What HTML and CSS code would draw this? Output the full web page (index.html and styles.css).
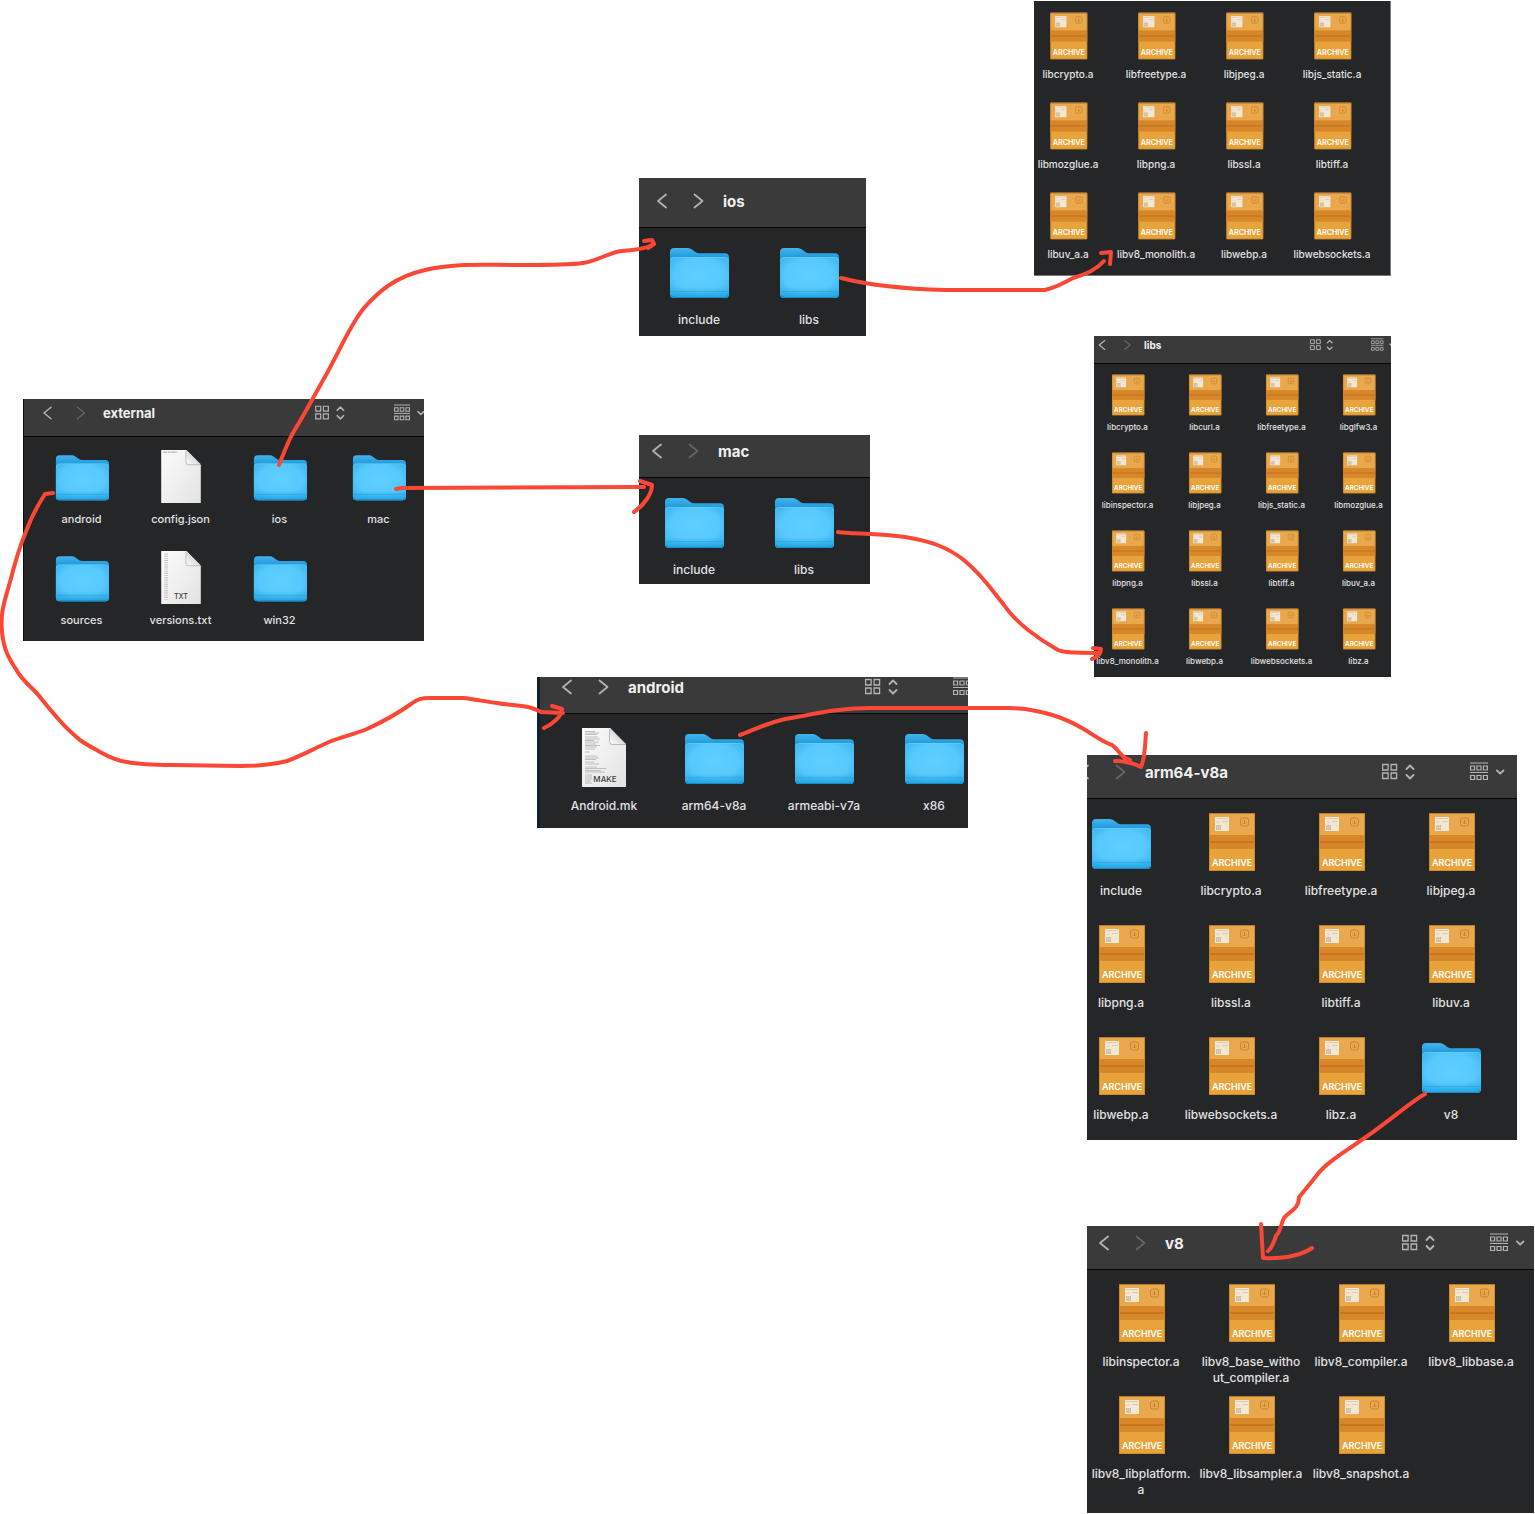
FILE: index.html
```html
<!DOCTYPE html>
<html lang="en">
<head>
<meta charset="utf-8">
<title>external – library folder map</title>
<meta name="viewport" content="width=device-width, initial-scale=1">
<link rel="stylesheet" href="styles.css">
</head>
<body>
<svg class="sprite" aria-hidden="true">
  <defs>
    <linearGradient id="folder-back" x1="0" y1="0" x2="0" y2="1">
      <stop offset="0" stop-color="#43b3ea"/><stop offset=".22" stop-color="#1b97dc"/><stop offset="1" stop-color="#1489cb"/>
    </linearGradient>
    <radialGradient id="folder-front" cx=".5" cy=".45" r=".68">
      <stop offset="0" stop-color="#5fceff"/><stop offset=".6" stop-color="#58c9fd"/><stop offset="1" stop-color="#35b1ec"/>
    </radialGradient>
    <linearGradient id="folder-base" x1="0" y1="0" x2="0" y2="1">
      <stop offset="0" stop-color="#35b2ec" stop-opacity="0"/><stop offset="1" stop-color="#1fa3e2"/>
    </linearGradient>
    <linearGradient id="page" x1="0" y1="0" x2="1" y2="1">
      <stop offset="0" stop-color="#fbfbfb"/><stop offset=".6" stop-color="#ededed"/><stop offset="1" stop-color="#e2e2e2"/>
    </linearGradient>
    <linearGradient id="page-fold" x1="0" y1="1" x2="1" y2="0">
      <stop offset="0" stop-color="#ffffff"/><stop offset=".5" stop-color="#d9d9d9"/>
    </linearGradient>
  </defs>

  <symbol id="folder" viewBox="0 0 64 60">
    <path d="M3 11q0-4 4-4h14q2 0 4 1.500l4 3q1 .8 3 .8h26q4 0 4 4v36q0 4-4 4h-51q-4 0-4-4z" fill="url(#folder-back)"/>
    <path d="M3 20q0-4 4-4h51q4 0 4 4v33q0 4-4 4h-51q-4 0-4-4z" fill="url(#folder-front)"/>
    <path d="M3 46h59v7q0 4-4 4h-51q-4 0-4-4z" fill="url(#folder-base)"/>
    <path d="M3.500 20q0-3.500 3.500-3.500h51q3.500 0 3.500 3.500" fill="none" stroke="#7ad4fb" stroke-width=".8" opacity=".6"/>
    <path d="M4 50.500h57" stroke="#269cd3" stroke-width=".5"/>
    <path d="M4 54q1 2.500 4 2.500h49q3 0 4-2.500" fill="none" stroke="#168bc6" stroke-width="1"/>
  </symbol>

  <symbol id="archive" viewBox="0 0 64 60">
    <rect x="10" y="1" width="46" height="58" rx="1" fill="#e8a33a"/>
    <rect x="10" y="1" width="46" height="23" rx="1" fill="#eaa84c"/>
    <rect x="10" y="23" width="46" height="14" fill="#d88728"/>
    <path d="M10 30h46" stroke="#b0691c" stroke-width="1"/>
    <path d="M10 1.500h46" stroke="#b67b31" stroke-width="1"/>
    <path d="M10.500 2v56M55.500 2v56M10 58.500h46" fill="none" stroke="#c9862c" stroke-width=".8"/>
    <rect x="16" y="5" width="14" height="14" rx=".6" fill="#f5e8d3"/>
    <path d="M17 6.500h12M23 9.500h6" stroke="#d9ccb8" stroke-width="1.200"/>
    <path d="M17 10h4" stroke="#d9ccb8" stroke-width=".8"/>
    <path d="M17 13h5v5h-5z" fill="#c9bba6"/>
    <path d="M18.500 13v5M20.500 13v5M17 15.500h5" stroke="#e6d9c4" stroke-width=".5"/>
    <rect x="41.500" y="6" width="8" height="8" rx="2" fill="none" stroke="#c98431" stroke-width="1"/>
    <path d="M45.500 8v4M43.800 10.300l1.700 1.700 1.700-1.700" fill="none" stroke="#c98431" stroke-width="1"/>
  </symbol>

  <symbol id="page-blank" viewBox="0 0 64 60">
    <path d="M10 1h28l16 17v42H10z" fill="url(#page)"/>
    <path d="M38 1v13q0 3 3 3h13z" fill="url(#page-fold)"/>
    <path d="M37.500 2v12.500q0 3 3 3H54" fill="none" stroke="#a9a9a9" stroke-width=".8"/>
  </symbol>

  <symbol id="page-json" viewBox="0 0 64 60">
    <use href="#page-blank" width="64" height="60"/>
    <path d="M12 3.500h16" stroke="#b5b5b5" stroke-width="1.200" stroke-dasharray="5 .6 3 .6"/>
  </symbol>

  <symbol id="page-txt" viewBox="0 0 64 60">
    <use href="#page-blank" width="64" height="60"/>
    <path d="M15.500 4v51" stroke="#bdbdbd" stroke-width="4" stroke-dasharray="1 1.400"/>
  </symbol>

  <symbol id="page-make" viewBox="0 0 64 60">
    <use href="#page-blank" width="64" height="60"/>
    <path d="M13 4.500h10M13 6h14M13 7.500h12M13 10h13M13 12h15M13 13.500h9M13 15h14M13 17h11M13 18.500h15M13 20h12M13 22h10M13 25h5M13 29h12M13 31h14M13 32.500h11M13 35h9M13 37h14M13 40h12M13 41.500h21M13 43.500h16M13 45h20M13 48h7M13 50h7M13 52h7M13 54h6M13 56h7" stroke="#b0b0b0" stroke-width=".8"/>
  </symbol>

  <symbol id="back" viewBox="0 0 26 20">
    <path d="M17 3.500l-8 6.500 8 6.500" fill="none" stroke="currentColor" stroke-width="1.700" stroke-linecap="round" stroke-linejoin="round"/>
  </symbol>
  <symbol id="forward" viewBox="0 0 26 20">
    <path d="M9.500 3.500l8 6.500-8 6.500" fill="none" stroke="currentColor" stroke-width="1.700" stroke-linecap="round" stroke-linejoin="round"/>
  </symbol>
  <symbol id="view" viewBox="0 0 34 20">
    <path d="M.6 2.500h5.500V8H.6zM9.100 2.500h5.500V8H9.100zM.6 11h5.500v5.500H.6zM9.100 11h5.500v5.500H9.100z" fill="none" stroke="currentColor" stroke-width="1.300"/>
    <path d="M24.500 7l3.500-3.500L31.500 7M24.500 13l3.500 3.500 3.500-3.500" fill="none" stroke="currentColor" stroke-width="1.800" stroke-linecap="round" stroke-linejoin="round"/>
  </symbol>
  <symbol id="group" viewBox="0 0 36 20">
    <path d="M0 1h18M0 10.500h18" stroke="currentColor" stroke-width="1.100"/>
    <path d="M.6 4h4v4h-4zM7 4h4v4H7zM13.400 4h4v4h-4zM.6 13.500h4v4h-4zM7 13.500h4v4H7zM13.400 13.500h4v4h-4z" fill="none" stroke="currentColor" stroke-width="1.200"/>
    <path d="M27 8.500l3.200 3.200 3.200-3.200" fill="none" stroke="currentColor" stroke-width="1.800" stroke-linecap="round" stroke-linejoin="round"/>
  </symbol>
</svg>

<main class="canvas">

  <section class="window window-ios-libs size-small" aria-label="ios libs">
    <ul class="files">
      <li class="file"><svg class="icon" viewBox="0 0 64 60"><use href="#archive"/><text x="33" y="54" class="badge-archive">ARCHIVE</text></svg><span>libcrypto.a</span></li>
      <li class="file"><svg class="icon" viewBox="0 0 64 60"><use href="#archive"/><text x="33" y="54" class="badge-archive">ARCHIVE</text></svg><span>libfreetype.a</span></li>
      <li class="file"><svg class="icon" viewBox="0 0 64 60"><use href="#archive"/><text x="33" y="54" class="badge-archive">ARCHIVE</text></svg><span>libjpeg.a</span></li>
      <li class="file"><svg class="icon" viewBox="0 0 64 60"><use href="#archive"/><text x="33" y="54" class="badge-archive">ARCHIVE</text></svg><span>libjs_static.a</span></li>
      <li class="file"><svg class="icon" viewBox="0 0 64 60"><use href="#archive"/><text x="33" y="54" class="badge-archive">ARCHIVE</text></svg><span>libmozglue.a</span></li>
      <li class="file"><svg class="icon" viewBox="0 0 64 60"><use href="#archive"/><text x="33" y="54" class="badge-archive">ARCHIVE</text></svg><span>libpng.a</span></li>
      <li class="file"><svg class="icon" viewBox="0 0 64 60"><use href="#archive"/><text x="33" y="54" class="badge-archive">ARCHIVE</text></svg><span>libssl.a</span></li>
      <li class="file"><svg class="icon" viewBox="0 0 64 60"><use href="#archive"/><text x="33" y="54" class="badge-archive">ARCHIVE</text></svg><span>libtiff.a</span></li>
      <li class="file"><svg class="icon" viewBox="0 0 64 60"><use href="#archive"/><text x="33" y="54" class="badge-archive">ARCHIVE</text></svg><span>libuv_a.a</span></li>
      <li class="file"><svg class="icon" viewBox="0 0 64 60"><use href="#archive"/><text x="33" y="54" class="badge-archive">ARCHIVE</text></svg><span>libv8_monolith.a</span></li>
      <li class="file"><svg class="icon" viewBox="0 0 64 60"><use href="#archive"/><text x="33" y="54" class="badge-archive">ARCHIVE</text></svg><span>libwebp.a</span></li>
      <li class="file"><svg class="icon" viewBox="0 0 64 60"><use href="#archive"/><text x="33" y="54" class="badge-archive">ARCHIVE</text></svg><span>libwebsockets.a</span></li>
    </ul>
  </section>

  <section class="window window-ios size-large">
    <header class="bar">
      <button class="nav" aria-label="Back"><svg><use href="#back"/></svg></button>
      <button class="nav" aria-label="Forward"><svg><use href="#forward"/></svg></button>
      <h2>ios</h2>
    </header>
    <ul class="files">
      <li class="file"><svg class="icon"><use href="#folder"/></svg><span>include</span></li>
      <li class="file"><svg class="icon"><use href="#folder"/></svg><span>libs</span></li>
    </ul>
  </section>

  <section class="window window-mac-libs size-mini">
    <header class="bar">
      <button class="nav" aria-label="Back"><svg><use href="#back"/></svg></button>
      <button class="nav" aria-label="Forward" disabled><svg><use href="#forward"/></svg></button>
      <h2>libs</h2>
      <div class="tools">
        <button class="tool-view" aria-label="View"><svg><use href="#view"/></svg></button>
        <button class="tool-group" aria-label="Group"><svg><use href="#group"/></svg></button>
      </div>
    </header>
    <ul class="files">
      <li class="file"><svg class="icon" viewBox="0 0 64 60"><use href="#archive"/><text x="33" y="54" class="badge-archive">ARCHIVE</text></svg><span>libcrypto.a</span></li>
      <li class="file"><svg class="icon" viewBox="0 0 64 60"><use href="#archive"/><text x="33" y="54" class="badge-archive">ARCHIVE</text></svg><span>libcurl.a</span></li>
      <li class="file"><svg class="icon" viewBox="0 0 64 60"><use href="#archive"/><text x="33" y="54" class="badge-archive">ARCHIVE</text></svg><span>libfreetype.a</span></li>
      <li class="file"><svg class="icon" viewBox="0 0 64 60"><use href="#archive"/><text x="33" y="54" class="badge-archive">ARCHIVE</text></svg><span>libglfw3.a</span></li>
      <li class="file"><svg class="icon" viewBox="0 0 64 60"><use href="#archive"/><text x="33" y="54" class="badge-archive">ARCHIVE</text></svg><span>libinspector.a</span></li>
      <li class="file"><svg class="icon" viewBox="0 0 64 60"><use href="#archive"/><text x="33" y="54" class="badge-archive">ARCHIVE</text></svg><span>libjpeg.a</span></li>
      <li class="file"><svg class="icon" viewBox="0 0 64 60"><use href="#archive"/><text x="33" y="54" class="badge-archive">ARCHIVE</text></svg><span>libjs_static.a</span></li>
      <li class="file"><svg class="icon" viewBox="0 0 64 60"><use href="#archive"/><text x="33" y="54" class="badge-archive">ARCHIVE</text></svg><span>libmozglue.a</span></li>
      <li class="file"><svg class="icon" viewBox="0 0 64 60"><use href="#archive"/><text x="33" y="54" class="badge-archive">ARCHIVE</text></svg><span>libpng.a</span></li>
      <li class="file"><svg class="icon" viewBox="0 0 64 60"><use href="#archive"/><text x="33" y="54" class="badge-archive">ARCHIVE</text></svg><span>libssl.a</span></li>
      <li class="file"><svg class="icon" viewBox="0 0 64 60"><use href="#archive"/><text x="33" y="54" class="badge-archive">ARCHIVE</text></svg><span>libtiff.a</span></li>
      <li class="file"><svg class="icon" viewBox="0 0 64 60"><use href="#archive"/><text x="33" y="54" class="badge-archive">ARCHIVE</text></svg><span>libuv_a.a</span></li>
      <li class="file"><svg class="icon" viewBox="0 0 64 60"><use href="#archive"/><text x="33" y="54" class="badge-archive">ARCHIVE</text></svg><span>libv8_monolith.a</span></li>
      <li class="file"><svg class="icon" viewBox="0 0 64 60"><use href="#archive"/><text x="33" y="54" class="badge-archive">ARCHIVE</text></svg><span>libwebp.a</span></li>
      <li class="file"><svg class="icon" viewBox="0 0 64 60"><use href="#archive"/><text x="33" y="54" class="badge-archive">ARCHIVE</text></svg><span>libwebsockets.a</span></li>
      <li class="file"><svg class="icon" viewBox="0 0 64 60"><use href="#archive"/><text x="33" y="54" class="badge-archive">ARCHIVE</text></svg><span>libz.a</span></li>
    </ul>
  </section>

  <section class="window window-external size-medium">
    <header class="bar">
      <button class="nav" aria-label="Back"><svg><use href="#back"/></svg></button>
      <button class="nav" aria-label="Forward" disabled><svg><use href="#forward"/></svg></button>
      <h2>external</h2>
      <div class="tools">
        <button class="tool-view" aria-label="View"><svg><use href="#view"/></svg></button>
        <button class="tool-group" aria-label="Group"><svg><use href="#group"/></svg></button>
      </div>
    </header>
    <ul class="files">
      <li class="file"><svg class="icon"><use href="#folder"/></svg><span>android</span></li>
      <li class="file"><svg class="icon"><use href="#page-json"/></svg><span>config.json</span></li>
      <li class="file"><svg class="icon"><use href="#folder"/></svg><span>ios</span></li>
      <li class="file"><svg class="icon"><use href="#folder"/></svg><span>mac</span></li>
      <li class="file"><svg class="icon"><use href="#folder"/></svg><span>sources</span></li>
      <li class="file"><svg class="icon" viewBox="0 0 64 60"><use href="#page-txt"/><text x="32" y="54" class="badge-page">TXT</text></svg><span>versions.txt</span></li>
      <li class="file"><svg class="icon"><use href="#folder"/></svg><span>win32</span></li>
    </ul>
  </section>

  <section class="window window-mac size-large">
    <header class="bar">
      <button class="nav" aria-label="Back"><svg><use href="#back"/></svg></button>
      <button class="nav" aria-label="Forward" disabled><svg><use href="#forward"/></svg></button>
      <h2>mac</h2>
    </header>
    <ul class="files">
      <li class="file"><svg class="icon"><use href="#folder"/></svg><span>include</span></li>
      <li class="file"><svg class="icon"><use href="#folder"/></svg><span>libs</span></li>
    </ul>
  </section>

  <section class="window window-android size-large">
    <header class="bar">
      <button class="nav" aria-label="Back"><svg><use href="#back"/></svg></button>
      <button class="nav" aria-label="Forward"><svg><use href="#forward"/></svg></button>
      <h2>android</h2>
      <div class="tools">
        <button class="tool-view" aria-label="View"><svg><use href="#view"/></svg></button>
        <button class="tool-group" aria-label="Group"><svg><use href="#group"/></svg></button>
      </div>
    </header>
    <ul class="files">
      <li class="file"><svg class="icon" viewBox="0 0 64 60"><use href="#page-make"/><text x="33" y="55" class="badge-page">MAKE</text></svg><span>Android.mk</span></li>
      <li class="file"><svg class="icon"><use href="#folder"/></svg><span>arm64-v8a</span></li>
      <li class="file"><svg class="icon"><use href="#folder"/></svg><span>armeabi-v7a</span></li>
      <li class="file"><svg class="icon"><use href="#folder"/></svg><span>x86</span></li>
    </ul>
  </section>

  <section class="window window-arm64 size-large">
    <header class="bar">
      <button class="nav" aria-label="Back"><svg><use href="#back"/></svg></button>
      <button class="nav" aria-label="Forward" disabled><svg><use href="#forward"/></svg></button>
      <h2>arm64-v8a</h2>
      <div class="tools">
        <button class="tool-view" aria-label="View"><svg><use href="#view"/></svg></button>
        <button class="tool-group" aria-label="Group"><svg><use href="#group"/></svg></button>
      </div>
    </header>
    <ul class="files">
      <li class="file"><svg class="icon"><use href="#folder"/></svg><span>include</span></li>
      <li class="file"><svg class="icon" viewBox="0 0 64 60"><use href="#archive"/><text x="33" y="54" class="badge-archive">ARCHIVE</text></svg><span>libcrypto.a</span></li>
      <li class="file"><svg class="icon" viewBox="0 0 64 60"><use href="#archive"/><text x="33" y="54" class="badge-archive">ARCHIVE</text></svg><span>libfreetype.a</span></li>
      <li class="file"><svg class="icon" viewBox="0 0 64 60"><use href="#archive"/><text x="33" y="54" class="badge-archive">ARCHIVE</text></svg><span>libjpeg.a</span></li>
      <li class="file"><svg class="icon" viewBox="0 0 64 60"><use href="#archive"/><text x="33" y="54" class="badge-archive">ARCHIVE</text></svg><span>libpng.a</span></li>
      <li class="file"><svg class="icon" viewBox="0 0 64 60"><use href="#archive"/><text x="33" y="54" class="badge-archive">ARCHIVE</text></svg><span>libssl.a</span></li>
      <li class="file"><svg class="icon" viewBox="0 0 64 60"><use href="#archive"/><text x="33" y="54" class="badge-archive">ARCHIVE</text></svg><span>libtiff.a</span></li>
      <li class="file"><svg class="icon" viewBox="0 0 64 60"><use href="#archive"/><text x="33" y="54" class="badge-archive">ARCHIVE</text></svg><span>libuv.a</span></li>
      <li class="file"><svg class="icon" viewBox="0 0 64 60"><use href="#archive"/><text x="33" y="54" class="badge-archive">ARCHIVE</text></svg><span>libwebp.a</span></li>
      <li class="file"><svg class="icon" viewBox="0 0 64 60"><use href="#archive"/><text x="33" y="54" class="badge-archive">ARCHIVE</text></svg><span>libwebsockets.a</span></li>
      <li class="file"><svg class="icon" viewBox="0 0 64 60"><use href="#archive"/><text x="33" y="54" class="badge-archive">ARCHIVE</text></svg><span>libz.a</span></li>
      <li class="file"><svg class="icon"><use href="#folder"/></svg><span>v8</span></li>
    </ul>
  </section>

  <section class="window window-v8 size-large">
    <header class="bar">
      <button class="nav" aria-label="Back"><svg><use href="#back"/></svg></button>
      <button class="nav" aria-label="Forward" disabled><svg><use href="#forward"/></svg></button>
      <h2>v8</h2>
      <div class="tools">
        <button class="tool-view" aria-label="View"><svg><use href="#view"/></svg></button>
        <button class="tool-group" aria-label="Group"><svg><use href="#group"/></svg></button>
      </div>
    </header>
    <ul class="files">
      <li class="file"><svg class="icon" viewBox="0 0 64 60"><use href="#archive"/><text x="33" y="54" class="badge-archive">ARCHIVE</text></svg><span>libinspector.a</span></li>
      <li class="file"><svg class="icon" viewBox="0 0 64 60"><use href="#archive"/><text x="33" y="54" class="badge-archive">ARCHIVE</text></svg><span>libv8_base_witho<br>ut_compiler.a</span></li>
      <li class="file"><svg class="icon" viewBox="0 0 64 60"><use href="#archive"/><text x="33" y="54" class="badge-archive">ARCHIVE</text></svg><span>libv8_compiler.a</span></li>
      <li class="file"><svg class="icon" viewBox="0 0 64 60"><use href="#archive"/><text x="33" y="54" class="badge-archive">ARCHIVE</text></svg><span>libv8_libbase.a</span></li>
      <li class="file"><svg class="icon" viewBox="0 0 64 60"><use href="#archive"/><text x="33" y="54" class="badge-archive">ARCHIVE</text></svg><span>libv8_libplatform.<br>a</span></li>
      <li class="file"><svg class="icon" viewBox="0 0 64 60"><use href="#archive"/><text x="33" y="54" class="badge-archive">ARCHIVE</text></svg><span>libv8_libsampler.a</span></li>
      <li class="file"><svg class="icon" viewBox="0 0 64 60"><use href="#archive"/><text x="33" y="54" class="badge-archive">ARCHIVE</text></svg><span>libv8_snapshot.a</span></li>
    </ul>
  </section>

  <svg class="arrows" aria-hidden="true">
    <!-- external/android to android -->
    <path d="M53 493L45 494C38 505 31 518 27 529C21 543 15 562 10 582C5 600 0 612 2 632C4 652 10 660 19 674C26 684 34 689 40 697C47 706 53 713 61 722C67 729 73 734 80 740C87 745 93 748 100 752C109 757 118 761 127 762C142 765 157 765 172 765L241 766C262 766 275 764 287 761C301 756 315 748 329 742C342 737 355 734 367 729C382 722 397 714 411 704C417 699 422 698 430 698L463 698C475 699 486 702 497 703C508 705 518 705 528 707C533 708 537 710 541 712L563 713M552 706L562 709C562 716 553 724 544 728"/>
    <!-- external/ios to ios -->
    <path d="M279 465C283 455 288 441 294 431C303 417 314 396 326 375C340 350 350 325 364 308C379 291 395 277 425 270C455 263 480 265 520 265C550 265 570 265 583 263C600 260 610 252 622 251C635 250 645 249 652 245M644 241L652 240L654 244L648 248"/>
    <!-- external/mac to mac -->
    <path d="M396 489L402 488L644 487M640 481L652 485C652 494 644 505 634 512"/>
    <!-- ios/libs to its archives -->
    <path d="M841 278C865 284 900 289 945 290L1045 290C1056 287 1060 285 1073 278C1085 274 1095 271 1104 261M1101 253L1111 252L1110 264"/>
    <!-- mac/libs to its archives -->
    <path d="M838 532C850 534 880 533 905 537C930 541 948 547 965 561C985 578 993 592 1004 605C1016 623 1040 640 1058 650C1066 654 1080 652 1098 653M1093 648L1101 649C1101 654 1097 657 1092 659"/>
    <!-- android/arm64-v8a to arm64-v8a -->
    <path d="M740 735C754 730 764 724 785 719C815 714 840 708 870 708L1010 708C1040 709 1065 718 1080 727C1093 734 1100 741 1112 745C1120 750 1119 757 1130 760M1115 761C1126 761 1135 764 1141 767C1145 758 1145 746 1146 733"/>
    <!-- arm64-v8a/v8 to v8 -->
    <path d="M1425 1094C1410 1102 1385 1125 1360 1141C1340 1155 1325 1164 1317 1175C1310 1184 1304 1191 1299 1197C1299 1210 1289 1211 1284 1218C1281 1223 1281 1231 1276 1236C1274 1242 1272 1248 1268 1251M1261 1224L1263 1258C1285 1259 1300 1256 1312 1248"/>
  </svg>
</main>
</body>
</html>
```
FILE: styles.css
```css
* {
  box-sizing: border-box;
}

body {
  margin: 0;
  background: #fff;
  font-family: Inter, "Liberation Sans", sans-serif;
}

.sprite {
  position: absolute;
  width: 0;
  height: 0;
}

.canvas {
  position: relative;
  min-height: 100vh;
  overflow: hidden;
}

/* Finder windows: pinned snapshots on the free canvas */
.window {
  position: absolute;
  overflow: hidden;
  background: #252628;
  color: #e2e2e3;
}

.size-large {
  --cell: 110px;
  --row: 112px;
  --icon-w: 64px;
  --icon-h: 60px;
  --gap: 11px;
  --top: 13px;
  --font: 12px;
  --line: 16px;
  --bar-row: 52px;
  --title: 15px;
  --nav-w: 26px;
  --nav-gap: 10px;
  --title-gap: 12px;
  --view-w: 34px;
  --tool-gap: 54px;
  --group-w: 36px;
  --tool-h: 20px;
}

.size-medium {
  --cell: 99px;
  --row: 101px;
  --icon-w: 58px;
  --icon-h: 54px;
  --gap: 9px;
  --top: 12px;
  --font: 11px;
  --line: 14px;
  --bar-row: 47px;
  --title: 13px;
  --nav-w: 23px;
  --nav-gap: 10px;
  --title-gap: 11px;
  --view-w: 31px;
  --tool-gap: 48px;
  --group-w: 32px;
  --tool-h: 18px;
}

.size-small {
  --cell: 88px;
  --row: 90px;
  --icon-w: 52px;
  --icon-h: 48px;
  --gap: 7px;
  --top: 11px;
  --font: 10px;
  --line: 14px;
}

.size-mini {
  --cell: 77px;
  --row: 78px;
  --icon-w: 45px;
  --icon-h: 42px;
  --gap: 5px;
  --top: 10px;
  --font: 8px;
  --line: 13px;
  --bar-row: 36px;
  --title: 10px;
  --nav-w: 18px;
  --nav-gap: 7px;
  --title-gap: 8px;
  --view-w: 24px;
  --tool-gap: 37px;
  --group-w: 25px;
  --tool-h: 14px;
}

.window-ios-libs {
  --files-start: -10px;
  left: 1034px;
  top: 1px;
  width: 357px;
  height: 275px;
  border-right: 1px solid #77797b;
  border-bottom: 1px solid #77797b;
}

.window-ios {
  --bar-h: 50px;
  --bar-start: 10px;
  --files-start: 5px;
  left: 639px;
  top: 178px;
  width: 227px;
  height: 158px;
}

.window-mac-libs {
  --bar-h: 28px;
  --bar-start: -1px;
  --bar-end: -5px;
  --files-start: -5px;
  left: 1094px;
  top: 336px;
  width: 297px;
  height: 341px;
}

.window-external {
  --bar-h: 38px;
  --bar-start: 12px;
  --bar-end: -2px;
  --files-start: 8px;
  left: 23px;
  top: 399px;
  width: 401px;
  height: 242px;
  border-left: 1px solid #0b0b0b;
}

.window-mac {
  --bar-h: 43px;
  --bar-start: 5px;
  --files-start: 0px;
  left: 639px;
  top: 435px;
  width: 231px;
  height: 149px;
}

.window-android {
  --bar-h: 37px;
  --bar-start: 14px;
  --bar-end: -21px;
  --files-start: 9px;
  left: 537px;
  top: 677px;
  width: 431px;
  height: 151px;
  border-left: 3px solid #10202c;
}

.window-arm64 {
  --bar-h: 44px;
  --bar-start: -16px;
  --bar-end: 11px;
  --files-start: -21px;
  left: 1087px;
  top: 755px;
  width: 430px;
  height: 385px;
}

.window-v8 {
  --bar-h: 44px;
  --bar-start: 4px;
  --bar-end: 8px;
  --files-start: -1px;
  left: 1087px;
  top: 1226px;
  width: 447px;
  height: 287px;
}

/* Title bar: content keeps its full height and is cut at the top */
.bar {
  display: flex;
  align-items: flex-end;
  height: var(--bar-h);
  border-bottom: 1px solid #060606;
  background: #3a3a3b;
}

.bar > * {
  display: flex;
  align-items: center;
  flex: none;
  height: var(--bar-row);
}

.bar h2 {
  margin: 0 0 0 var(--title-gap);
  color: #f0f0f0;
  font-size: var(--title);
  font-weight: 700;
  white-space: nowrap;
}

.bar button {
  padding: 0;
  border: 0;
  background: none;
  color: #b4b4b5;
}

.bar button:disabled {
  color: #656567;
}

.bar svg {
  display: block;
  width: 100%;
  height: var(--tool-h);
}

.nav {
  width: var(--nav-w);
}

.nav:first-child {
  margin-left: var(--bar-start);
  margin-right: var(--nav-gap);
}

.tools {
  gap: var(--tool-gap);
  margin-left: auto;
  margin-right: var(--bar-end);
}

.tool-view {
  width: var(--view-w);
}

.tool-group {
  width: var(--group-w);
}

/* Icon view */
.files {
  display: grid;
  grid-template-columns: repeat(4, var(--cell));
  grid-auto-rows: var(--row);
  margin: 0 0 0 var(--files-start);
  padding: var(--top) 0 0;
  list-style: none;
}

.file {
  display: flex;
  flex-direction: column;
  align-items: center;
  gap: var(--gap);
  font-size: var(--font);
  font-weight: 500;
  line-height: var(--line);
  text-align: center;
  white-space: nowrap;
}

.icon {
  flex: none;
  width: var(--icon-w);
  height: var(--icon-h);
}

.badge-archive {
  fill: #fff;
  font-size: 9px;
  font-weight: 600;
  text-anchor: middle;
}

.badge-page {
  fill: #3c3c3c;
  font-size: 8px;
  font-weight: 500;
  text-anchor: middle;
}

/* Hand-drawn links between folders */
.arrows {
  position: absolute;
  inset: 0;
  width: 100%;
  height: 100%;
  fill: none;
  stroke: #fb4735;
  stroke-width: 4;
  stroke-linecap: round;
  stroke-linejoin: round;
  pointer-events: none;
}
```
